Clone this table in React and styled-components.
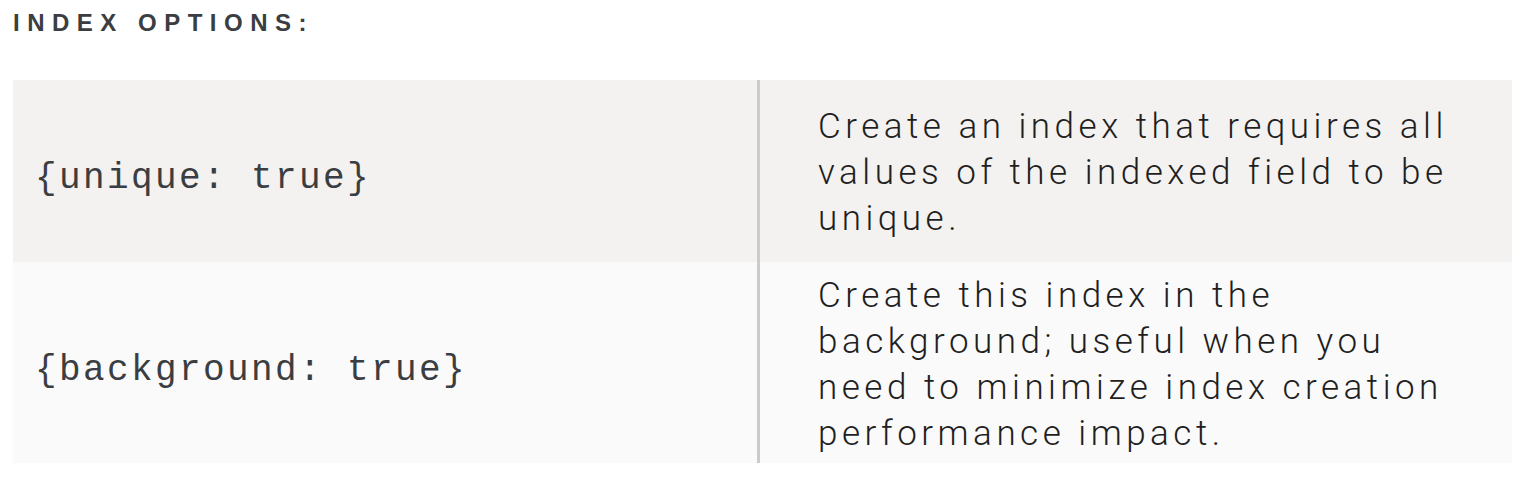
import styled, { createGlobalStyle } from "styled-components";

const GlobalStyle = createGlobalStyle`
  html, body {
    margin: 0;
    padding: 0;
    background: #ffffff;
  }
`;

const Page = styled.div`
  padding: 9px 14px 0 13px;
`;

const Heading = styled.h3`
  margin: 0;
  font-family: "Liberation Sans", Arial, sans-serif;
  font-weight: 700;
  font-size: 24px;
  line-height: 27px;
  letter-spacing: 7.5px;
  color: #3a3e42;
`;

const Table = styled.div`
  margin-top: 44px;
  display: grid;
  grid-template-columns: 747px 1fr;
`;

const Row = styled.div`
  display: contents;
`;

const Cell = styled.div`
  background: ${(p) => (p.$shade ? "#f3f2f0" : "#fafafa")};
  min-height: ${(p) => p.$height}px;
  display: flex;
  align-items: center;
  box-sizing: border-box;
`;

const KeyCell = styled(Cell)`
  padding: 15px 0 0 22px;
  border-right: 3px solid #cbcbcb;
`;

const DescCell = styled(Cell)`
  padding: ${(p) => (p.$shade ? "3px 0 0 58px" : "4px 0 0 58px")};
`;

const Code = styled.code`
  font-family: "Liberation Mono", "Courier New", monospace;
  font-size: 36px;
  letter-spacing: 2.4px;
  color: #3a3e42;
`;

const Desc = styled.p`
  margin: 0;
  max-width: 642px;
  font-family: Roboto, "Liberation Sans", Arial, sans-serif;
  font-weight: 300;
  font-size: 35px;
  line-height: 46px;
  letter-spacing: 4.5px;
  color: #1f1f1f;
`;

const options = [
  {
    key: "{unique: true}",
    text: "Create an index that requires all values of the indexed field to be unique.",
    height: 182,
    shade: true,
  },
  {
    key: "{background: true}",
    text: "Create this index in the background; useful when you need to minimize index creation performance impact.",
    height: 201,
    shade: false,
  },
];

export default function App() {
  return (
    <>
      <GlobalStyle />
      <Page>
        <Heading>INDEX OPTIONS:</Heading>
        <Table>
          {options.map((o) => (
            <Row key={o.key}>
              <KeyCell $shade={o.shade} $height={o.height}>
                <Code>{o.key}</Code>
              </KeyCell>
              <DescCell $shade={o.shade} $height={o.height}>
                <Desc>{o.text}</Desc>
              </DescCell>
            </Row>
          ))}
        </Table>
      </Page>
    </>
  );
}
